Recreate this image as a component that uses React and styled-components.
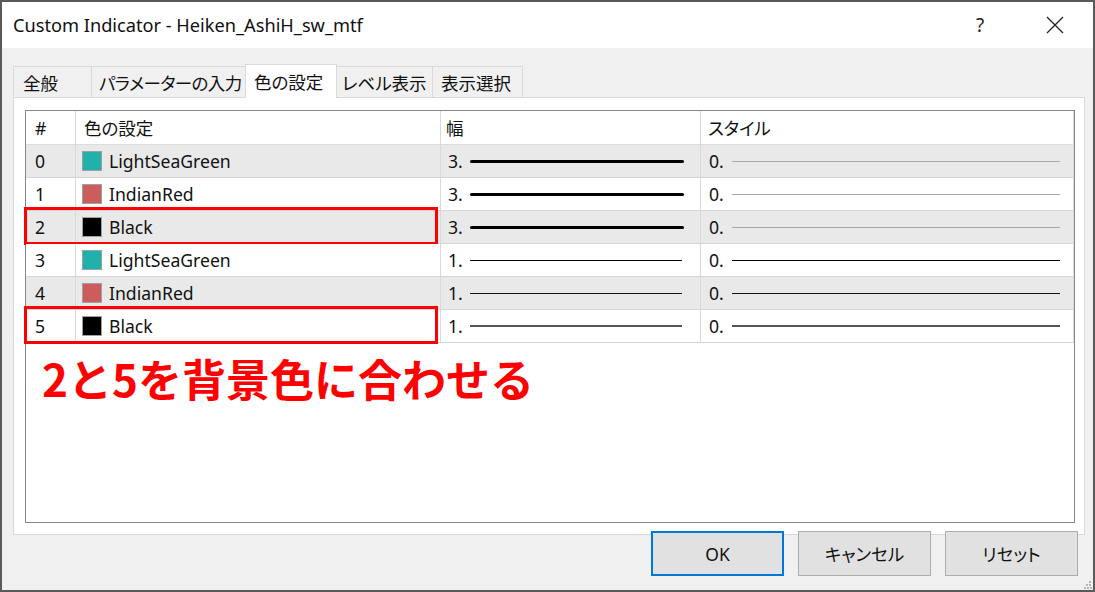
import React from "react";
import styled, { createGlobalStyle } from "styled-components";

const Global = createGlobalStyle`
  html, body { margin: 0; padding: 0; background: #fff; }
  * { box-sizing: border-box; }
  body { font-family: "Noto Sans", "Noto Sans CJK JP", sans-serif; }
`;

const Window = styled.div`
  position: relative;
  width: 1095px;
  height: 592px;
  border: 2px solid #5a5a5a;
  background: #f0f0f0;
  display: flex;
  flex-direction: column;
  overflow: hidden;
`;

const TitleBar = styled.div`
  height: 46px;
  background: #fff;
  display: flex;
  align-items: center;
  padding-left: 11px;
  flex-shrink: 0;
`;

const Title = styled.div`
  flex: 1;
  font-size: 18.2px;
  color: #111;
`;

const TitleButton = styled.div`
  width: 46px;
  height: 46px;
  display: flex;
  align-items: center;
  justify-content: center;
  font-size: 19px;
  color: #222;
  margin-right: ${(p) => p.$mr || 0}px;
`;

const Body = styled.div`
  flex: 1;
  display: flex;
  flex-direction: column;
  padding: 16px 8px 0 11px;
`;

const Tabs = styled.div`
  display: flex;
  align-items: flex-end;
  height: 33px;
  position: relative;
  z-index: 1;
`;

const Tab = styled.div`
  width: ${(p) => p.$w}px;
  height: ${(p) => (p.$active ? 34 : 31)}px;
  background: ${(p) => (p.$active ? "#fff" : "#f0f0f0")};
  border: 1px solid #d9d9d9;
  border-bottom: none;
  margin-left: ${(p) => (p.$first ? 0 : -1)}px;
  padding-left: ${(p) => p.$pl}px;
  display: flex;
  align-items: center;
  font-family: "Noto Sans CJK JP", sans-serif;
  font-feature-settings: "palt";
  font-size: 17.5px;
  letter-spacing: ${(p) => p.$ls || 0}px;
  color: #111;
  white-space: nowrap;
  overflow: hidden;
  margin-bottom: ${(p) => (p.$active ? -1 : 0)}px;
`;

const Panel = styled.div`
  height: 438px;
  background: #fff;
  border: 1px solid #d9d9d9;
  padding: 12px 9px 11px 11px;
  display: flex;
`;

const List = styled.div`
  flex: 1;
  border: 1px solid #828790;
  background: #fff;
  display: flex;
  flex-direction: column;
`;

const Grid = styled.div`
  position: relative;
  display: grid;
  grid-template-columns: 50px 365px 260px 1fr;
  height: ${(p) => (p.$header ? 34 : 33)}px;
  background: ${(p) => (p.$shade ? "#e9e9e9" : "#fff")};
  border-bottom: 1px solid ${(p) => (p.$header ? "#dcdcdc" : "#d6d6d6")};
  border-right: 1px solid #dadada;
`;

const Cell = styled.div`
  display: flex;
  align-items: center;
  padding-left: ${(p) => p.$pl || 0}px;
  border-right: ${(p) => (p.$last ? "none" : "1px solid #d9d9d9")};
  font-size: 17.6px;
  color: #111;
  white-space: nowrap;
  min-width: 0;
`;

const HeadText = styled.span`
  font-family: "Noto Sans CJK JP", sans-serif;
  font-feature-settings: "palt";
  font-size: 17.5px;
`;

const Swatch = styled.span`
  width: 20px;
  height: 20px;
  border: 1px solid #a0a0a0;
  background: ${(p) => p.$color};
  margin-right: 7px;
  flex-shrink: 0;
`;

const Num = styled.span`
  width: ${(p) => p.$w}px;
  flex-shrink: 0;
`;

const Line = styled.span`
  flex: 1;
  height: ${(p) => p.$h}px;
  background: ${(p) => p.$color};
  border-radius: ${(p) => (p.$h > 2 ? 2 : 0)}px;
  margin-right: ${(p) => p.$mr}px;
`;

const Highlight = styled.div`
  position: absolute;
  left: -2px;
  top: -4px;
  width: 414px;
  height: 38px;
  border: 3px solid #ff0000;
  pointer-events: none;
`;

const Note = styled.div`
  margin-top: 8px;
  padding-left: 16px;
  font-family: "Noto Sans CJK JP", sans-serif;
  font-weight: 700;
  font-size: 44px;
  line-height: 54px;
  color: #ff0000;
`;

const Buttons = styled.div`
  display: flex;
  justify-content: flex-end;
  gap: 14px;
  margin-top: -4px;
  padding-right: 7px;
  position: relative;
  z-index: 1;
`;

const Button = styled.div`
  width: 133px;
  height: 45px;
  background: #e1e1e1;
  border: ${(p) => (p.$default ? "2px solid #0078d7" : "1px solid #adadad")};
  display: flex;
  align-items: center;
  justify-content: center;
  font-family: "Noto Sans", "Noto Sans CJK JP", sans-serif;
  font-feature-settings: "palt";
  font-size: 17.5px;
  color: #111;
`;

const Grip = styled.svg`
  position: absolute;
  right: 1px;
  bottom: 1px;
`;

const tabs = [
  { label: "全般", w: 79, pl: 9 },
  { label: "パラメーターの入力", w: 155, pl: 7, ls: -0.6 },
  { label: "色の設定", w: 92, pl: 8, active: true },
  { label: "レベル表示", w: 97, pl: 5 },
  { label: "表示選択", w: 91, pl: 8 },
];

const rows = [
  { color: "#20b2aa", name: "LightSeaGreen", w: "3.", wh: 3, wc: "#000", s: "#a8a8a8", sh: 1 },
  { color: "#cd5c5c", name: "IndianRed", w: "3.", wh: 3, wc: "#000", s: "#a8a8a8", sh: 1 },
  { color: "#000", name: "Black", w: "3.", wh: 3, wc: "#000", s: "#a8a8a8", sh: 1, hl: true },
  { color: "#20b2aa", name: "LightSeaGreen", w: "1.", wh: 1, wc: "#000", s: "#000", sh: 1 },
  { color: "#cd5c5c", name: "IndianRed", w: "1.", wh: 1, wc: "#111", s: "#111", sh: 1 },
  { color: "#000", name: "Black", w: "1.", wh: 2, wc: "#555", s: "#555", sh: 2, hl: true },
];

export default function App() {
  return (
    <>
      <Global />
      <Window>
        <TitleBar>
          <Title>Custom Indicator - Heiken_AshiH_sw_mtf</Title>
          <TitleButton $mr={29}>?</TitleButton>
          <TitleButton $mr={15}>
            <svg width="18" height="18" viewBox="0 0 18 18">
              <path d="M1 1 L17 17 M17 1 L1 17" stroke="#222" strokeWidth="1.3" fill="none" />
            </svg>
          </TitleButton>
        </TitleBar>
        <Body>
          <Tabs>
            {tabs.map((t, i) => (
              <Tab key={t.label} $w={t.w} $pl={t.pl} $ls={t.ls} $active={t.active} $first={i === 0}>
                {t.label}
              </Tab>
            ))}
          </Tabs>
          <Panel>
            <List>
              <Grid $header>
                <Cell $pl={9}>#</Cell>
                <Cell $pl={8}><HeadText>色の設定</HeadText></Cell>
                <Cell $pl={5}><HeadText>幅</HeadText></Cell>
                <Cell $pl={7} $last><HeadText>スタイル</HeadText></Cell>
              </Grid>
              {rows.map((r, i) => (
                <Grid key={i} $shade={i % 2 === 0}>
                  <Cell $pl={9}>{i}</Cell>
                  <Cell $pl={6}>
                    <Swatch $color={r.color} />
                    {r.name}
                  </Cell>
                  <Cell $pl={7}>
                    <Num $w={22}>{r.w}</Num>
                    <Line $h={r.wh} $color={r.wc} $mr={r.wh === 3 ? 16 : 18} />
                  </Cell>
                  <Cell $pl={8} $last>
                    <Num $w={23}>0.</Num>
                    <Line $h={r.sh} $color={r.s} $mr={13} />
                  </Cell>
                  {r.hl && <Highlight />}
                </Grid>
              ))}
              <Note>2と5を背景色に合わせる</Note>
            </List>
          </Panel>
          <Buttons>
            <Button $default>OK</Button>
            <Button>キャンセル</Button>
            <Button>リセット</Button>
          </Buttons>
        </Body>
        <Grip width="8" height="8" viewBox="0 0 8 8">
          <rect x="5" y="0" width="2" height="2" fill="#b5b5b5" />
          <rect x="2" y="3" width="2" height="2" fill="#b5b5b5" />
          <rect x="5" y="3" width="2" height="2" fill="#b5b5b5" />
          <rect x="0" y="6" width="2" height="2" fill="#b5b5b5" />
          <rect x="3" y="6" width="2" height="2" fill="#b5b5b5" />
          <rect x="6" y="6" width="2" height="2" fill="#b5b5b5" />
        </Grip>
      </Window>
    </>
  );
}
